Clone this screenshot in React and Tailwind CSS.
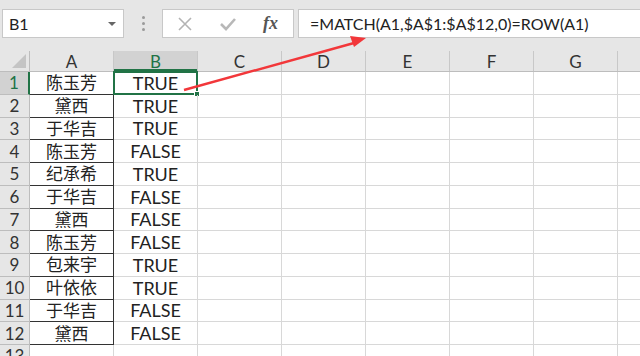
import React from "react";

const names = ["陈玉芳", "黛西", "于华吉", "陈玉芳", "纪承希", "于华吉", "黛西", "陈玉芳", "包来宇", "叶依依", "于华吉", "黛西"];
const results = ["TRUE", "TRUE", "TRUE", "FALSE", "TRUE", "FALSE", "FALSE", "FALSE", "TRUE", "TRUE", "FALSE", "FALSE"];
const cols = ["A", "B", "C", "D", "E", "F", "G", ""];

const font = { fontFamily: "Lato, 'Noto Sans CJK SC', sans-serif" };

const Toolbar = () => (
    <div className="h-[51px] bg-[#e6e6e6] flex items-start pt-[9px] pl-[2px]">
        {/* name box */}
        <div className="w-[122px] h-[29px] bg-white border border-[#c8c8c8] flex items-center justify-between pl-[6px] pr-[7px] text-[16px] text-[#222]">
            <span>B1</span>
            <span className="w-0 h-0 border-l-[4px] border-r-[4px] border-t-[4px] border-l-transparent border-r-transparent border-t-[#666]"></span>
        </div>
        <div className="w-[38px] h-[29px] flex flex-col items-center justify-center gap-[3px]">
            <span className="w-[3px] h-[3px] bg-[#9a9a9a] rounded-full"></span>
            <span className="w-[3px] h-[3px] bg-[#9a9a9a] rounded-full"></span>
            <span className="w-[3px] h-[3px] bg-[#9a9a9a] rounded-full"></span>
        </div>
        {/* cancel / enter / fx */}
        <div className="w-[132px] h-[29px] bg-white border border-[#c8c8c8] flex items-center">
            <svg width="16" height="16" viewBox="0 0 16 16" className="ml-[14px]">
                <path d="M2 2 L14 14 M14 2 L2 14" stroke="#b3b3b3" strokeWidth="1.6" fill="none" />
            </svg>
            <svg width="18" height="16" viewBox="0 0 18 16" className="ml-[26px]">
                <path d="M2 8 L7 13 L16 3" stroke="#b8b8b8" strokeWidth="2.6" fill="none" />
            </svg>
            <span className="ml-[26px] text-[18px] italic font-bold text-[#555]" style={{ fontFamily: "'Liberation Serif', serif" }}>fx</span>
        </div>
        <div className="w-[4px]"></div>
        <div className="flex-1 h-[29px] bg-white border border-[#c8c8c8] border-r-0 flex items-center pl-[11px] text-[16px] text-[#222]">
            =MATCH(A1,$A$1:$A$12,0)=ROW(A1)
        </div>
    </div>
);

const HeaderRow = () => (
    <div className="flex h-[21px] shrink-0 bg-[#e6e6e6] border-b border-[#bdbdbd]">
        <div className="w-[30px] shrink-0 border-r border-[#bdbdbd] relative">
            <div className="absolute right-[3px] bottom-[3px] w-0 h-0"
                style={{ borderBottom: "14px solid #c4c4c4", borderLeft: "14px solid transparent" }}></div>
        </div>
        {cols.map((c) => (
            <div key={c || "h"}
                className={`w-[84px] shrink-0 flex items-center justify-center text-[17px] leading-none border-r border-[#c8c8c8] ${c === "B" ? "bg-[#d2d2d2] text-[#217346] shadow-[inset_0_-2px_0_#217346]" : "text-[#333]"}`}>
                {c}
            </div>
        ))}
    </div>
);

const Row = ({ n, name, result }) => {
    const first = n === 1;
    return (
        <div className="flex h-[22.75px] shrink-0">
            <div className={`w-[30px] shrink-0 flex items-center justify-center text-[17px] leading-none border-r border-b border-[#bdbdbd] ${first ? "bg-[#d2d2d2] text-[#217346] border-r-2 border-r-[#217346]" : "bg-[#e6e6e6] text-[#333]"}`}>
                {n}
            </div>
            <div className={`w-[84px] shrink-0 flex items-center justify-center text-[17px] leading-none text-[#222] ${name ? "border-r border-b border-[#333]" : "border-r border-b border-[#d8d8d8]"}`}>
                {name}
            </div>
            <div className="w-[84px] shrink-0 flex items-center justify-center text-[18px] leading-none text-[#222] border-r border-b border-[#d8d8d8] relative">
                {result}
                {first && (
                    <div className="absolute -left-[1px] -top-[1px] w-[85px] h-[24px] border-2 border-[#217346]">
                        <div className="absolute -right-[4px] -bottom-[4px] w-[6px] h-[6px] bg-[#217346] border border-white"></div>
                    </div>
                )}
            </div>
            {cols.slice(2).map((c) => (
                <div key={c || "h"} className="w-[84px] shrink-0 border-r border-b border-[#d8d8d8]"></div>
            ))}
        </div>
    );
};

const App = () => (
    <div className="w-[640px] h-[356px] overflow-hidden bg-white relative" style={font}>
        <Toolbar />
        <div className="h-[305px] overflow-hidden flex flex-col">
            <HeaderRow />
            {names.map((nm, i) => (
                <Row key={i} n={i + 1} name={nm} result={results[i]} />
            ))}
            <Row n={13} name="" result="" />
        </div>
        {/* red annotation arrow */}
        <svg className="absolute left-0 top-0 pointer-events-none" width="640" height="356">
            <line x1="184" y1="90" x2="354" y2="43" stroke="#f2373a" strokeWidth="2.4" />
            <polygon points="366,38 350,36 354,47" fill="#f2373a" />
        </svg>
    </div>
);

export default App;
